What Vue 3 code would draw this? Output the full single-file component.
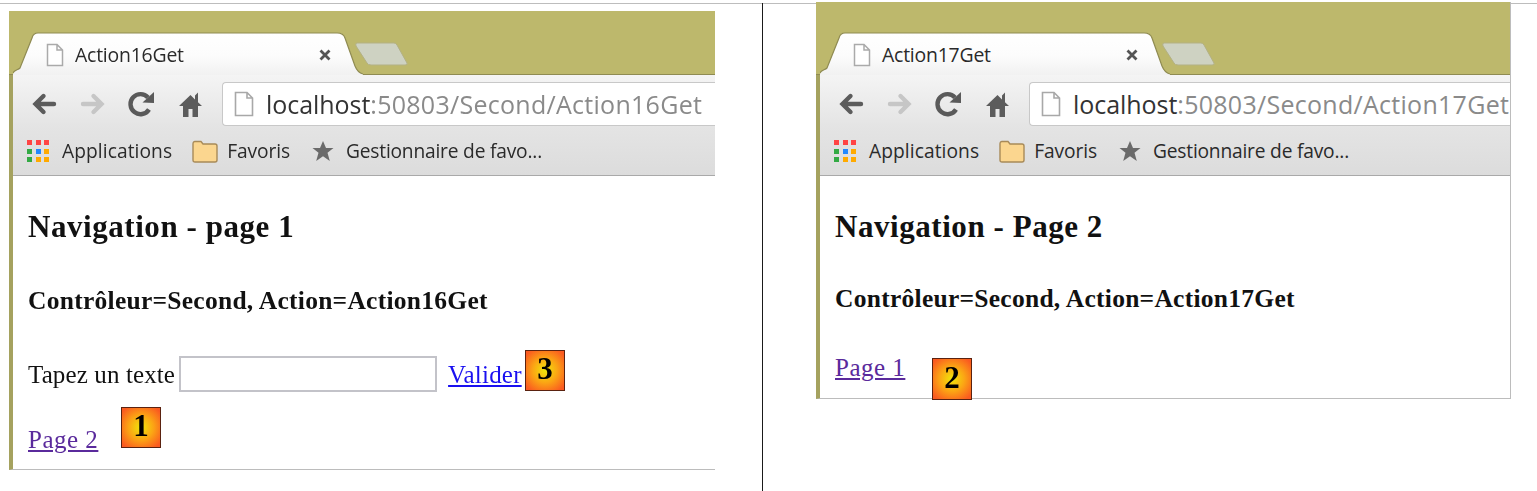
<script setup>
const windows = [
  { id: 'first', action: 'Action16Get', heading: 'Navigation - page 1', link: 'Page 2', form: true,
    badges: [{ n: '3', cls: 'b3' }, { n: '1', cls: 'b1' }] },
  { id: 'second', action: 'Action17Get', heading: 'Navigation - Page 2', link: 'Page 1', form: false,
    badges: [{ n: '2', cls: 'b2' }] }
]
const dots = ['#f44','#f44','#f44','#3a4','#28f','#fa0','#3a4','#fa0','#fa0']
</script>

<template>
  <div class="screen">
    <div class="rule"></div>
    <div v-for="w in windows" :key="w.id" class="cell" :class="'cell-' + w.id">
      <section class="window" :class="w.id">
        <div class="strip">
          <svg class="tabshape" width="400" height="43" viewBox="0 0 400 43">
            <defs>
              <linearGradient :id="'tabfill' + w.id" x1="0" y1="0" x2="0" y2="1">
                <stop offset="0" stop-color="#ffffff" /><stop offset=".55" stop-color="#fcfcfc" /><stop offset="1" stop-color="#f1f1f1" />
              </linearGradient>
            </defs>
            <path d="M344 11 H381 Q383 11 384 13 L394 31 Q395 33 392 33 H358 Q355 33 354 31 L343 14 Q342 11 344 11Z" fill="#ced2c2" stroke="#b3b184" />
            <path d="M0 43 V42 C1 38 5 38 7 36 L19 6 C20 2 22 1 25 1 H324 C329 1 331 3 332 6 L342 34 C344 39 346 41 350 42 V43Z" :fill="'url(#tabfill' + w.id + ')'" />
            <path d="M0 41 C1 38 5 38 7 36 L19 6 C20 2 22 1 25 1 H324 C329 1 331 3 332 6 L342 34 C344 39 346 41 350 42" fill="none" stroke="#8f8b52" stroke-width="1.2" />
          </svg>
          <div class="tab">
            <svg class="tabicon" width="18" height="24" viewBox="0 0 18 24"><path d="M1.5 1.5H11L16.5 7V22.5H1.5Z M11 1.5V7H16.5" fill="#fff" stroke="#aaa" stroke-width="1.5" /></svg>
            <span class="tabtitle">{{ w.action }}</span>
            <svg class="tabclose" width="12" height="12" viewBox="0 0 12 12"><path d="M1.5 1.5L10.5 10.5M10.5 1.5L1.5 10.5" stroke="#555" stroke-width="2.8" /></svg>
          </div>
        </div>
        <div class="toolbar">
          <span class="tool"><svg width="26" height="24" viewBox="0 0 26 24"><path d="M23 12H6M12.500 4L4.500 12L12.500 20" fill="none" stroke="#5c5c5c" stroke-width="4.4" stroke-linecap="round" /></svg></span>
          <span class="tool"><svg width="26" height="24" viewBox="0 0 26 24"><path d="M3 12H20M13.500 4L21.500 12L13.500 20" fill="none" stroke="#c6c6c6" stroke-width="4.4" stroke-linecap="round" /></svg></span>
          <span class="tool"><svg width="27" height="27" viewBox="0 0 27 27"><path d="M21 18.5A10 10 0 1 1 20 6.5" fill="none" stroke="#5a5a5a" stroke-width="4.4" /><path d="M14.500 11.500L26 12V1Z" fill="#5a5a5a" /></svg></span>
          <span class="tool"><svg width="25" height="27" viewBox="0 0 25 27"><path d="M12.500 4L1 15H5V26H10.500V18H14.500V26H20V15H24L20 11.200V1.500L17 4.500V8.500Z" fill="#5c5c5c" /></svg></span>
          <div class="omnibox">
            <svg class="omniicon" width="20" height="26" viewBox="0 0 20 26"><path d="M1.500 1.500H13L18.500 7V24.500H1.500Z M13 1.500V7H18.500" fill="#fff" stroke="#a8a8a8" stroke-width="1.600" /></svg>
            <span class="url"><span class="host">localhost</span>:50803/Second/{{ w.action }}</span>
          </div>
        </div>
        <div class="bookmarks">
          <span class="apps"><i v-for="(c, i) in dots" :key="i" :style="{ background: c }"></i></span>
          <span class="bm apptext">Applications</span>
          <svg class="folder" width="26" height="23" viewBox="0 0 26 23"><path d="M1 4Q1 1.500 3 1.500H9L11 4H23Q25 4 25 6V20Q25 22 23 22H3Q1 22 1 20Z" fill="#fbd68f" stroke="#a88a58" stroke-width="1.400" /></svg>
          <span class="bm favtext">Favoris</span>
          <svg class="star" width="22" height="22" viewBox="0 0 22 22"><path d="M11 1L14 8H21.500L15.500 12.800L17.800 21L11 16.200L4.200 21L6.500 12.800L0.500 8H8Z" fill="#6a6a6a" /></svg>
          <span class="bm manager">Gestionnaire de favo...</span>
        </div>
        <div class="page">
          <h2>{{ w.heading }}</h2>
          <h3>Contrôleur=Second, Action={{ w.action }}</h3>
          <div class="formrow" v-if="w.form">
            <span class="lbl">Tapez un texte</span>
            <input class="field" type="text" />
            <a class="submit" href="#">Valider</a>
          </div>
          <a class="pagelink" href="#">{{ w.link }}</a>
          <span v-for="b in w.badges" :key="b.n" class="badge" :class="b.cls">{{ b.n }}</span>
        </div>
      </section>
    </div>
  </div>
</template>

<style>
html, body { margin: 0; background: #fff; overflow: hidden; }
</style>

<style scoped>
.screen {
  width: 1537px; height: 491px; box-sizing: border-box; display: grid;
  grid-template-columns: 762px 1px 1fr; background: #fff;
  overflow: hidden;
  padding-top: 3px;
}
.cell { border-top: 1px solid #bdbdbd; min-width: 0; grid-row: 1; }
.cell-first { grid-column: 1; padding: 7px 0 0 9px; }
.cell-second { grid-column: 3; padding-left: 53px; }
.rule { background: #1a1a1a; grid-column: 2; grid-row: 1; }
.window {
  position: relative; box-sizing: border-box; border-left: 4px solid #a5a25f;
  border-bottom: 1px solid #bcbcbc; display: flex; flex-direction: column;
  font-family: "Open Sans", "Noto Sans", sans-serif; background: #fff;
  filter: blur(.3px);
}
.window.first { width: 706px; height: 459px; }
.window.second { width: 695px; height: 397px; margin-top: -2px; border-right: 1px solid #bcbcbc; z-index: 1; }
.strip {
  position: relative; background: #bdb86c; flex: none; height: 64px; margin-left: -4px; padding-left: 4px;
  box-sizing: border-box; border-bottom: 1px solid #8f8b52;
}
.second .strip { height: 73px; }
.tabshape { position: absolute; left: 4px; bottom: -1px; z-index: 1; }
.tab {
  position: absolute; left: 4px; bottom: 0; width: 330px; height: 41px; z-index: 2;
  display: flex; align-items: center; padding: 2px 0 0 33px; box-sizing: border-box;
}
.tabtitle { margin-left: 11px; font-size: 19.400px; color: #2a2a2a; letter-spacing: -.2px; }
.tabclose { position: absolute; left: 306px; top: 16px; }
.toolbar {
  flex: none; height: 52px; box-sizing: border-box; display: flex; align-items: flex-start;
  padding: 7px 0 0 6px; overflow: hidden;
  background: linear-gradient(#f4f4f4, #e4e4e4);
}
.tool { flex: none; width: 49px; height: 44px; display: flex; align-items: center; justify-content: center; }
.omnibox {
  flex: 1; margin-left: 7px; height: 44px; box-sizing: border-box; display: flex; align-items: center;
  background: #fff; border: 1px solid #c8c8c8; border-right: 0; border-radius: 4px 0 0 4px; padding-left: 11px;
  min-width: 0;
}
.url { margin-left: 12px; font-size: 25px; color: #8a8a8a; white-space: nowrap; letter-spacing: .28px; }
.host { color: #333; letter-spacing: -.05px; }
.bookmarks {
  flex: none; height: 49px; box-sizing: border-box; display: flex; align-items: center; padding-left: 14px;
  background: linear-gradient(#e4e4e4, #dcdcdc); border-bottom: 1px solid #a9a9a9;
}
.apps { display: grid; grid-template-columns: repeat(3, 5px); grid-auto-rows: 5px; gap: 3.500px; flex: none; }
.apps i { display: block; }
.bm { font-size: 19.200px; color: #2a2a2a; margin-left: 12px; padding-bottom: 2px; white-space: nowrap; letter-spacing: -.1px; }
.apptext { margin-left: 13px; letter-spacing: .07px; }
.manager { letter-spacing: -.2px; }
.folder { margin-left: 20px; flex: none; }
.favtext { margin-left: 9px; }
.star { margin-left: 22px; flex: none; }
.page {
  position: relative; flex: 1; box-sizing: border-box; padding: 35px 0 0 15px;
  font-family: "Liberation Serif", serif; font-size: 25px; letter-spacing: .2px; color: #111; background: #fff;
}
h2 { margin: 0; font-size: 31px; line-height: 32px; font-weight: 700; letter-spacing: .55px; }
h3 { margin: 44px 0 0; font-size: 25.500px; line-height: 28px; font-weight: 700; letter-spacing: .27px; }
.second h3 { margin-top: 42px; }
.formrow { display: flex; align-items: center; height: 36px; margin: 41px 0 0; line-height: 28px; }
.lbl { padding-top: 2px; letter-spacing: .12px; }
.submit { padding-top: 2px; margin-left: 11px; color: #1a10f0; }
.field {
  width: 258px; height: 36px; box-sizing: border-box; margin: 0 0 0 4px; padding: 0;
  border: 2px solid #c3c3c9; background: #fff; outline: none;
}
.pagelink { display: block; width: max-content; margin: 34px 0 0; line-height: 28px; color: #5a2a9c; letter-spacing: .5px; }
.second .pagelink { margin: 41px 0 0; }
.badge {
  position: absolute; width: 40px; height: 41px; box-sizing: border-box;
  border: 1px solid #5a2210; background: radial-gradient(circle, #efe60a 0%, #fba514 45%, #fa5a20 90%);
  display: flex; align-items: center; justify-content: center;
  font-family: "Liberation Serif", serif; font-weight: 700; font-size: 31px; letter-spacing: 0; color: #000; z-index: 3;
  padding-bottom: 3px;
}
.b3 { left: 512px; top: 174px; }
.b1 { left: 108px; top: 231px; }
.b2 { left: 112px; top: 182px; height: 42px; }
</style>
